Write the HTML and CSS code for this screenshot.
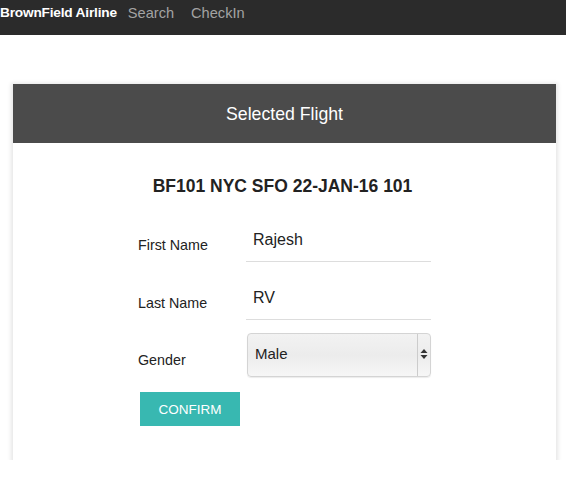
FILE: index.html
```html
<!DOCTYPE html>
<html>
<head>
<meta charset="utf-8">
<link rel="stylesheet" href="styles.css">
</head>
<body>
<nav class="navbar">
  <span class="brand">BrownField Airline</span>
  <a class="nav-link">Search</a>
  <a class="nav-link">CheckIn</a>
</nav>
<div class="card">
  <div class="card-header">Selected Flight</div>
  <div class="card-body">
    <h3 class="flight">BF101 NYC SFO 22-JAN-16 101</h3>
    <div class="row">
      <label class="label">First Name</label>
      <div class="field text-field">Rajesh</div>
    </div>
    <div class="row">
      <label class="label">Last Name</label>
      <div class="field text-field">RV</div>
    </div>
    <div class="row row-select">
      <label class="label">Gender</label>
      <div class="field select-field">
        <span class="select-value">Male</span>
        <span class="select-arrow">
          <svg width="8" height="12" viewBox="0 0 8 12"><path d="M4 1 L7.5 5 L0.5 5 Z M4 11 L7.5 7 L0.5 7 Z" fill="#333"/></svg>
        </span>
      </div>
    </div>
    <button class="btn">CONFIRM</button>
  </div>
</div>
</body>
</html>
```
FILE: styles.css
```css
html, body {
  margin: 0;
  padding: 0;
  background: #fff;
  font-family: "Liberation Sans", Arial, sans-serif;
}
.navbar {
  height: 35px;
  background: #2b2b2b;
  display: flex;
  align-items: flex-start;
  padding-top: 5px;
  box-sizing: border-box;
}
.brand {
  color: #fff;
  font-weight: bold;
  font-size: 13.7px;
  letter-spacing: -0.2px;
  margin-right: 11px;
}
.nav-link {
  color: #a3a3a3;
  font-size: 14.6px;
  margin-right: 17px;
}
.card {
  margin: 49px 0 0 13px;
  width: 543px;
  height: 376px;
  background: #fff;
  box-shadow: 0 1px 4px 2px rgba(0,0,0,0.1);
}
.card-header {
  height: 59px;
  background: #4b4b4b;
  color: #fff;
  font-size: 17.7px;
  display: flex;
  align-items: center;
  justify-content: center;
  padding-top: 1px;
  box-sizing: border-box;
}
.card-body {
  padding: 33px 0 0 125px;
}
.flight {
  margin: 0 0 15px -14px;
  width: 317px;
  text-align: center;
  font-size: 17.5px;
  font-weight: bold;
  color: #222;
}
.row {
  display: flex;
  align-items: flex-end;
  height: 50px;
  margin-bottom: 8px;
}
.label {
  width: 108px;
  font-size: 14.3px;
  color: #222;
  padding-bottom: 9px;
}
.text-field {
  width: 185px;
  height: 40px;
  border-bottom: 1px solid #ddd;
  box-sizing: border-box;
  font-size: 16px;
  color: #222;
  padding: 9px 0 0 7px;
}
.row-select {
  height: auto;
  margin-top: 13px;
  margin-bottom: 0;
}
.select-field {
  width: 184px;
  height: 44px;
  margin-left: 1px;
  box-sizing: border-box;
  border: 1px solid #d4d4d4;
  border-radius: 4px;
  background: linear-gradient(#f2f2f2, #ececec 50%, #f6f6f6);
  display: flex;
  align-items: flex-start;
  box-shadow: 0 1px 1px rgba(0,0,0,0.08);
}
.row-select .label { padding-bottom: 9px; }
.select-value {
  flex: 1;
  font-size: 15px;
  color: #222;
  padding: 11px 0 0 7px;
}
.select-arrow {
  width: 13px;
  height: 42px;
  border-left: 1px solid #ccc;
  display: flex;
  justify-content: center;
  padding-top: 14px;
  box-sizing: border-box;
}
.btn {
  display: block;
  margin: 15px 0 0 2px;
  width: 100px;
  height: 34px;
  background: #38b8b1;
  border: none;
  color: #fff;
  font-family: "Liberation Sans", Arial, sans-serif;
  font-size: 13.5px;
  padding: 0;
}
```
